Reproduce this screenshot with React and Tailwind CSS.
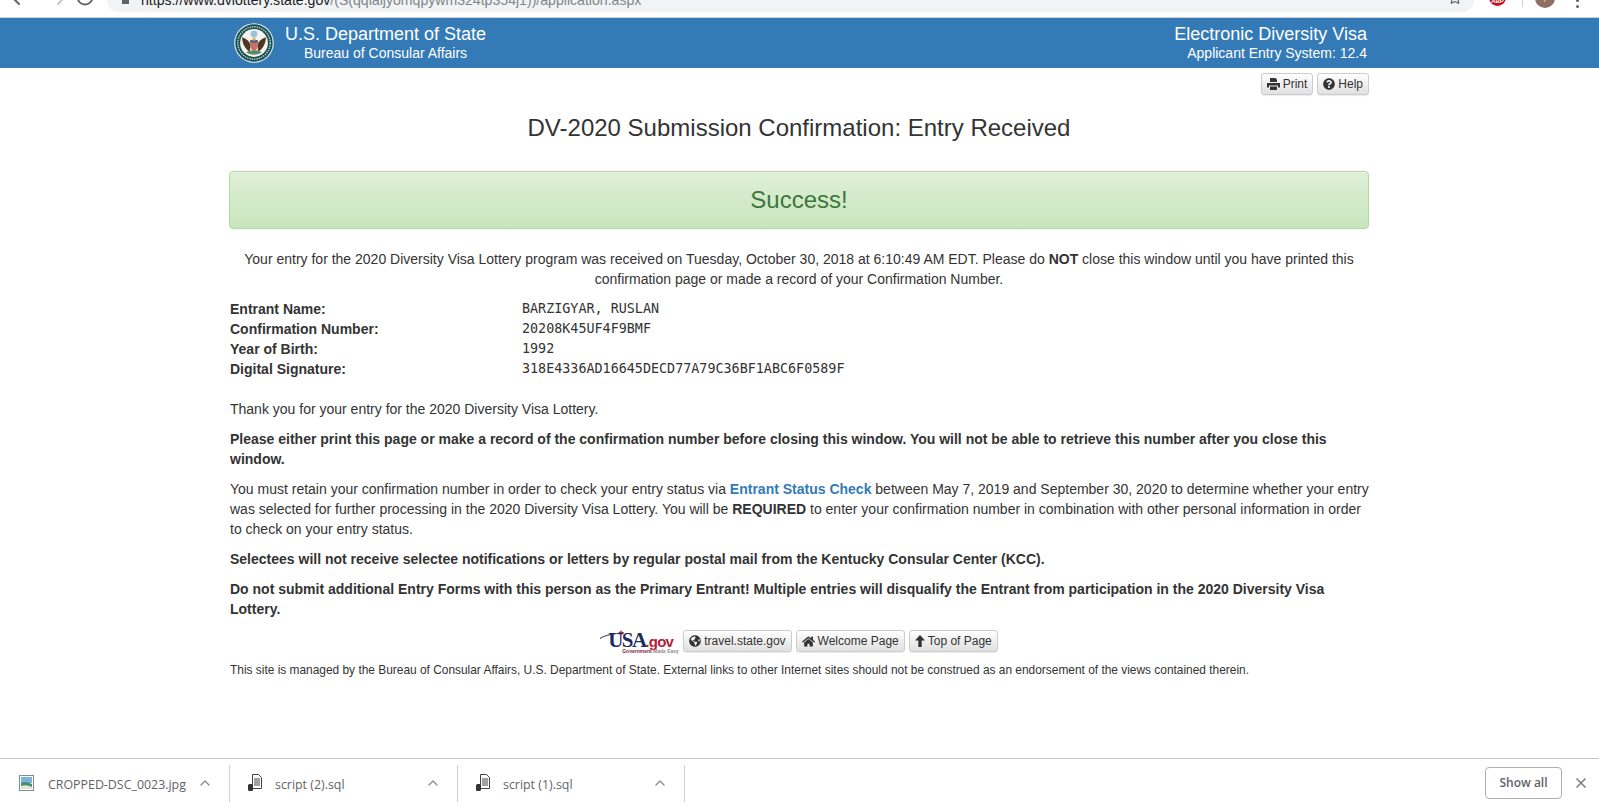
import React from "react";
import { FaQuestionCircle, FaGlobeAmericas, FaHome } from "react-icons/fa";
import { ChevronUp, ArrowLeft, ArrowRight, RotateCw, Star, X } from "lucide-react";

const entrant = [
  ["Entrant Name:", "BARZIGYAR, RUSLAN"],
  ["Confirmation Number:", "20208K45UF4F9BMF"],
  ["Year of Birth:", "1992"],
  ["Digital Signature:", "318E4336AD16645DECD77A79C36BF1ABC6F0589F"],
];

const downloads = [
  { name: "CROPPED-DSC_0023.jpg", kind: "image", width: "w-[230px] pl-[19px]" },
  { name: "script (2).sql", kind: "sql", width: "w-[228px] pl-[17px]" },
  { name: "script (1).sql", kind: "sql", width: "w-[227px] pl-[17px]" },
];

const Seal = () => (
  <svg width="40" height="40" viewBox="0 0 42 42" className="shrink-0">
    <circle cx="21" cy="21" r="20.800" fill="#e4ece6" />
    <circle cx="21" cy="21" r="19.600" fill="#174f58" />
    <circle cx="21" cy="21" r="17" fill="none" stroke="#b9d0c8" strokeWidth="1.500" strokeDasharray="1.500 1" />
    <circle cx="21" cy="21" r="14.600" fill="#f6f4ea" />
    <circle cx="21" cy="11.500" r="3.600" fill="#9cc3dc" />
    <path d="M8.500 15c3 1 7 3 9 8l-1 7c-4-2-8-8-8-15zM33.500 15c-3 1-7 3-9 8l1 7c4-2 8-8 8-15z" fill="#4e3621" />
    <path d="M17 18h8v6c0 3-2 5-4 6-2-1-4-3-4-6z" fill="#c9706b" />
    <path d="M17 18h8v2.500h-8z" fill="#3f5f94" />
    <path d="M19.500 15.500h3v3h-3z" fill="#d7ad3c" />
    <path d="M13 31c4 3 12 3 16 0l-3-2h-10z" fill="#5a8a63" />
  </svg>
);

const UsaGov = () => (
  <div className="relative w-[79px] h-[22px] shrink-0">
    <svg width="34" height="14" viewBox="0 0 34 14" className="absolute left-0 top-0">
      <path d="M0 8.500C6 5 13 3.500 24 3" fill="none" stroke="#1d2b63" strokeWidth="1" />
      <path d="M21 0l.8 1.700 1.900.2-1.400 1.300.4 1.900-1.700-1-1.700 1 .4-1.900-1.400-1.300 1.900-.2z" fill="#c2203a" />
    </svg>
    <span className="absolute left-[8px] top-[-2px] font-['Liberation_Serif',serif] font-bold text-[21px] leading-[24px] tracking-[-1.500px] text-[#1d2b63]">USA</span>
    <span className="absolute left-[45px] top-[2px] font-['Liberation_Sans',sans-serif] font-bold text-[15px] leading-[20px] tracking-[-0.700px] text-[#b3213a]">.gov</span>
    <span className="absolute left-[22px] top-[19px] text-[5px] leading-[5px] whitespace-nowrap font-bold">
      <span className="text-[#7a2a3a]">Government</span> <span className="text-[#8a8a8a]">Made Easy</span>
    </span>
  </div>
);

const PrintIcon = () => (
  <svg width="13" height="12" viewBox="0 0 13 12" fill="currentColor">
    <path d="M3 0h5.500L10 1.500V4H3z" />
    <path d="M0 5h13v4.500h-2V7.500H2v2H0z" />
    <path d="M3 8.500h7V12H3z" />
  </svg>
);

const ArrowUpIcon = () => (
  <svg width="10" height="12" viewBox="0 0 10 12" fill="currentColor">
    <path d="M5 0l5 5.500H6.700V12H3.300V5.500H0z" />
  </svg>
);

const SmallButton = ({ icon, children }) => (
  <button className="h-[22px] px-[5px] flex items-center gap-[3px] text-[12px] leading-[18px] text-[#333] rounded-[3px] border border-[#ccc] bg-gradient-to-b from-white to-[#e0e0e0] shadow-[0_1px_1px_rgba(0,0,0,0.08)]">
    {icon}
    {children}
  </button>
);

const FileIcon = ({ kind }) =>
  kind === "image" ? (
    <svg width="16" height="16" viewBox="0 0 16 16" className="shrink-0 mr-[1px]">
      <rect x="0.500" y="0.500" width="14" height="15" fill="#fff" stroke="#7f8c99" />
      <rect x="2" y="2" width="11" height="6" fill="#7fb2d8" />
      <path d="M2 8c3-2 7-1 11 1v5H2z" fill="#3f8f78" />
      <path d="M2 11c3-1 7-1 11 1v2H2z" fill="#e8e4c8" />
    </svg>
  ) : (
    <svg width="16" height="18" viewBox="0 0 16 18" className="shrink-0">
      <path d="M5.500 .5h6l3 3v11h-9z" fill="#fff" stroke="#444" />
      <path d="M7 5h6M7 7h6M7 9h6M7 11h6" stroke="#444" />
      <rect x="1" y="10" width="5" height="7" rx="1.500" fill="#333" />
    </svg>
  );

export default function App() {
  return (
    <div className="w-[1599px] h-[807px] overflow-hidden flex flex-col bg-white text-[#333] text-[14px] leading-[20px] font-['Liberation_Sans',Arial,sans-serif]">
      {/* browser toolbar, cut off by the capture */}
      <div className="h-[18px] shrink-0 relative bg-white border-b border-[#d0d0d0]">
        <div className="absolute left-[7px] top-[-15px] flex text-[#5f6368]">
          <ArrowLeft size={24} strokeWidth={2} />
          <ArrowRight size={24} strokeWidth={2} className="ml-[15px] text-[#c4c6c9]" />
          <RotateCw size={20} strokeWidth={2.200} className="ml-[5px] mt-[2px]" />
        </div>
        <div className="absolute left-[107px] top-[-12px] w-[1367px] h-[24px] rounded-full bg-[#f1f3f4] flex items-end pb-[4px] pl-[15px] text-[14.100px] leading-[16px] text-[#80868b]">
          <div className="w-[7px] h-[5px] bg-[#5f6368] mr-[12px] mb-[4px]" />
          <span className="text-[#202124]">https://www.dvlottery.state.gov</span>
          <span>/(S(qqlaljyomqpywm324tp354j1))/application.aspx</span>
          <Star size={14} className="absolute right-[12px] top-[3px] text-[#5f6368]" />
        </div>
        <div className="absolute left-[1489px] top-[-11px] w-[17px] h-[17px] rounded-full bg-[#c4111b] flex items-end justify-center text-white text-[6px] leading-[8px] font-bold pb-[1px]">ABP</div>
        <div className="absolute left-[1522px] top-0 w-px h-[7px] bg-[#d0d0d0]" />
        <div className="absolute left-[1535px] top-[-12px] w-[20px] h-[20px] rounded-full bg-[#8d6e63] flex items-end justify-center text-[#e8dcd6] text-[8px] leading-[10px] pb-[3px]">r</div>
        <div className="absolute left-[1576px] top-[-1px] flex flex-col gap-[3px]">
          <div className="w-[3px] h-[3px] rounded-full bg-[#5f6368]" />
          <div className="w-[3px] h-[3px] rounded-full bg-[#5f6368]" />
        </div>
      </div>

      {/* site header */}
      <header className="h-[50px] shrink-0 bg-[#337ab7] text-white">
        <div className="w-[1140px] ml-[229px] h-full flex justify-between">
          <div className="flex items-center gap-[11px] pl-[5px]">
            <Seal />
            <div className="flex flex-col items-center pt-[1px] self-start mt-[5px]">
              <div className="text-[18px] leading-[20px] h-[20px]">U.S. Department of State</div>
              <div className="text-[14px] leading-[18px]">Bureau of Consular Affairs</div>
            </div>
          </div>
          <div className="flex flex-col items-end pr-[2px] pt-[6px]">
            <div className="text-[18px] leading-[20px]">Electronic Diversity Visa</div>
            <div className="text-[14px] leading-[18px]">Applicant Entry System: 12.4</div>
          </div>
        </div>
      </header>

      <main className="flex-1 w-[1140px] ml-[229px]">
        <div className="flex justify-end gap-[4px] pt-[5px]">
          <SmallButton icon={<PrintIcon />}>Print</SmallButton>
          <SmallButton icon={<FaQuestionCircle size={12} />}>Help</SmallButton>
        </div>

        <h1 className="mt-[20px] text-center text-[24px] leading-[26px]">DV-2020 Submission Confirmation: Entry Received</h1>

        <div className="mt-[30px] h-[58px] flex items-center justify-center rounded-[4px] border border-[#b2dba1] bg-gradient-to-b from-[#dff0d8] to-[#c8e5bc] text-[#3c763d] text-[24px] shadow-[0_1px_0_rgba(255,255,255,0.25)_inset,0_1px_2px_rgba(0,0,0,0.05)]">
          Success!
        </div>

        <p className="mt-[20px] text-center">
          Your entry for the 2020 Diversity Visa Lottery program was received on Tuesday, October 30, 2018 at 6:10:49 AM EDT. Please do <b>NOT</b> close this window until you have printed this confirmation page or made a record of your Confirmation Number.
        </p>

        <div className="mt-[10px] pl-[1px] grid grid-cols-[292px_1fr]">
          {entrant.map(([label, value]) => (
            <React.Fragment key={label}>
              <div className="font-bold">{label}</div>
              <div className="font-['DejaVu_Sans_Mono',monospace] text-[13.400px]">{value}</div>
            </React.Fragment>
          ))}
        </div>

        <div className="pl-[1px]">
          <p className="mt-[20px]">Thank you for your entry for the 2020 Diversity Visa Lottery.</p>
          <p className="mt-[10px] font-bold">
            Please either print this page or make a record of the confirmation number before closing this window. You will not be able to retrieve this number after you close this window.
          </p>
          <p className="mt-[10px]">
            You must retain your confirmation number in order to check your entry status via <a className="font-bold text-[#337ab7]">Entrant Status Check</a> between May 7, 2019 and September 30, 2020 to determine whether your entry was selected for further processing in the 2020 Diversity Visa Lottery. You will be <b>REQUIRED</b> to enter your confirmation number in combination with other personal information in order to check on your entry status.
          </p>
          <p className="mt-[10px] font-bold">
            Selectees will not receive selectee notifications or letters by regular postal mail from the Kentucky Consular Center (KCC).
          </p>
          <p className="mt-[10px] font-bold">
            Do not submit additional Entry Forms with this person as the Primary Entrant! Multiple entries will disqualify the Entrant from participation in the 2020 Diversity Visa Lottery.
          </p>
        </div>

        <div className="mt-[11px] flex justify-center items-center gap-[4px]">
          <UsaGov />
          <SmallButton icon={<FaGlobeAmericas size={12} />}>travel.state.gov</SmallButton>
          <SmallButton icon={<FaHome size={13} />}>Welcome Page</SmallButton>
          <SmallButton icon={<ArrowUpIcon />}>Top of Page</SmallButton>
        </div>

        <p className="mt-[10px] pl-[1px] text-[11.920px] leading-[17px]">
          This site is managed by the Bureau of Consular Affairs, U.S. Department of State. External links to other Internet sites should not be construed as an endorsement of the views contained therein.
        </p>
      </main>

      {/* download shelf */}
      <footer className="h-[49px] shrink-0 flex items-center bg-white border-t border-[#c4c4c4] font-['Open_Sans',sans-serif] text-[12.400px] text-[#5f6368]">
        {downloads.map((d) => (
          <div key={d.name} className={`${d.width} h-[37px] flex items-center pr-[16px] border-r border-[#d0d0d0]`}>
            <FileIcon kind={d.kind} />
            <span className="ml-[12px] mt-[3px] flex-1 truncate">{d.name}</span>
            <ChevronUp size={16} className="text-[#8a8d91] shrink-0" />
          </div>
        ))}
        <div className="ml-auto flex items-center pr-[10px]">
          <button className="w-[77px] h-[32px] rounded-[4px] border border-[#b0b0b0] font-semibold text-[#5f6368] text-[12px]">Show all</button>
          <X size={16} strokeWidth={2.500} className="ml-[11px] text-[#7a7d81]" />
        </div>
      </footer>
    </div>
  );
}
